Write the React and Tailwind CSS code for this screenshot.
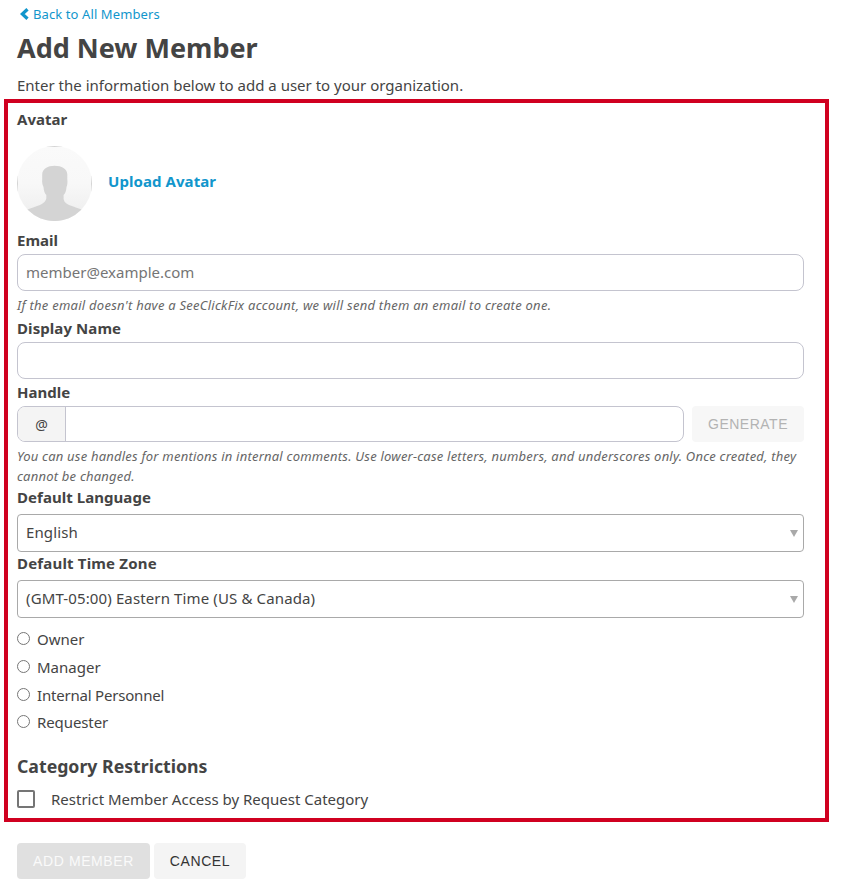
import React, { useState } from 'react';

const roles = [
  { id: 'owner', label: 'Owner', row: 'h-7' },
  { id: 'manager', label: 'Manager', row: 'h-7' },
  { id: 'internal', label: 'Internal Personnel', row: 'h-7 tracking-[-0.2px]' },
  { id: 'requester', label: 'Requester', row: 'h-[27px] tracking-[-0.1px]' },
];

const AvatarPlaceholder = () => (
  <svg width="75" height="75" viewBox="0 0 75 75" className="shrink-0">
    <defs>
      <linearGradient id="avatarBg" x1="0" y1="0" x2="0" y2="1">
        <stop offset="0" stopColor="#fafafa" />
        <stop offset="0.5" stopColor="#f8f8f8" />
        <stop offset="1" stopColor="#ececec" />
      </linearGradient>
      <clipPath id="avatarClip">
        <circle cx="37.5" cy="37.5" r="37.5" />
      </clipPath>
    </defs>
    <g clipPath="url(#avatarClip)">
      <rect width="75" height="75" fill="url(#avatarBg)" />
      <path
        d="M37.5 19.700C31 19.700 25.200 22.500 25.200 28.500V33C24.800 36.500 25.600 39.500 26.500 41C26.800 45 27.800 47.500 29.300 49V52.500C28.800 55 27 57 23 59C18 61 14 62 10.500 63.500L3 75H72L64.500 63.500C61 62 57 61 52 59C48 57 46.800 55 46.600 52.500V49C48.200 47.500 49.200 45 49.500 41C50.400 39.500 50.700 36.500 50.300 33V28.500C50.300 22.500 44.500 19.700 37.500 19.700Z"
        fill="#d4d4d4"
      />
      <rect x="0.500" y="0.500" width="74" height="74" fill="none" stroke="#d4d4d4" />
    </g>
  </svg>
);

const Select = ({ value }) => (
  <button
    type="button"
    className="flex h-[38px] w-full items-center justify-between rounded-[4px] border border-[#a9a9a9] bg-white pr-[5px] pl-2 text-[15px]"
  >
    <span className="pb-[2px] tracking-[0.13px]">{value}</span>
    <svg width="8" height="7" viewBox="0 0 8 7">
      <path d="M0 0H8L4 7Z" fill="#a9a9a9" />
    </svg>
  </button>
);

const App = () => {
  const [role, setRole] = useState(null);

  return (
    <div className="h-[885px] w-[861px] overflow-hidden bg-white font-['Noto_Sans',sans-serif] text-[15px] text-[#444444]">
      <header className="pl-[17px]">
        <a href="#" className="flex h-7 items-center gap-[4px] pl-[3px] text-[13px] tracking-[0.1px] text-[#1196cc]">
          <svg width="9" height="12" viewBox="0 0 9 12">
            <path d="M7.500 1.200L2.300 6L7.500 10.800" fill="none" stroke="#1196cc" strokeWidth="3.300" />
          </svg>
          <span className="pt-[2px]">Back to All Members</span>
        </a>
        <h1 className="h-10 text-[27px] leading-10 font-bold">Add New Member</h1>
        <p className="flex h-[31px] items-center pt-[3px]">
          Enter the information below to add a user to your organization.
        </p>
      </header>

      <main className="ml-1 w-[825px] border-4 border-[#d00020] pr-[21px] pb-[5px] pl-[9px]">
        <h2 className="h-[34px] leading-8 font-bold">Avatar</h2>
        <div className="mt-[9px] flex items-center gap-4">
          <AvatarPlaceholder />
          <a href="#" className="pb-1 font-bold tracking-[0.07px] text-[#1196cc]">Upload Avatar</a>
        </div>

        <label htmlFor="email" className="mt-[7px] flex h-[26px] items-center pb-[2px] font-bold">Email</label>
        <input
          id="email"
          type="email"
          placeholder="member@example.com"
          className="block h-[37px] w-full rounded-[8px] border border-[#c4c4cf] px-2 pb-[2px] text-[15px] placeholder:text-[#757575]"
        />
        <p className="h-7 text-[13px] leading-7 tracking-[0.255px] text-[#666666] italic">
          If the email doesn't have a SeeClickFix account, we will send them an email to create one.
        </p>

        <label htmlFor="name" className="mb-[3px] block h-5 leading-[18px] font-bold tracking-[0.08px]">Display Name</label>
        <input id="name" type="text" className="block h-[37px] w-full rounded-[8px] border border-[#c4c4cf] px-2" />

        <label htmlFor="handle" className="flex h-[27px] items-center font-bold">Handle</label>
        <div className="flex gap-2">
          <div className="flex h-9 w-[667px] overflow-hidden rounded-[8px] border border-[#c4c4cf]">
            <span className="flex w-12 shrink-0 items-center justify-center border-r border-[#c4c4cf] bg-[#f4f4f4] text-[14px]">@</span>
            <input id="handle" type="text" className="min-w-0 flex-1 px-2" />
          </div>
          <button
            type="button"
            className="h-9 w-[112px] rounded-[4px] bg-[#f7f7f7] font-['Liberation_Sans',sans-serif] text-[14px] tracking-[0.5px] text-[#b3b3b3]"
          >
            GENERATE
          </button>
        </div>
        <p className="mt-1 text-[13px] leading-5 tracking-[0.215px] text-[#666666] italic">
          <span className="block whitespace-nowrap">
            You can use handles for mentions in internal comments. Use lower-case letters, numbers, and underscores only. Once created, they
          </span>
          <span className="block">cannot be changed.</span>
        </p>

        <h2 className="mt-[2px] mb-[6px] h-5 leading-[18px] font-bold tracking-[0.05px]">Default Language</h2>
        <Select value="English" />
        <h2 className="mb-1 h-6 leading-[22px] font-bold tracking-[0.18px]">Default Time Zone</h2>
        <Select value="(GMT-05:00) Eastern Time (US & Canada)" />

        <div className="mt-[7px]">
          {roles.map((item) => (
            <label key={item.id} className={`flex items-center gap-[7px] ${item.row}`}>
              <input
                type="radio"
                name="role"
                checked={role === item.id}
                onChange={() => setRole(item.id)}
                className="mb-[2px] h-[13px] w-[13px]"
              />
              {item.label}
            </label>
          ))}
        </div>

        <h2 className="mt-[17px] h-7 text-[17.7px] leading-[26px] font-bold">Category Restrictions</h2>
        <label className="mt-1 flex h-7 items-center gap-4">
          <input type="checkbox" className="h-[18px] w-[18px] appearance-none rounded-[2px] border-2 border-[#757575]" />
          Restrict Member Access by Request Category
        </label>
      </main>

      <footer className="mt-[21px] flex gap-1 pl-[17px] font-['Liberation_Sans',sans-serif] text-[14px] tracking-[0.6px]">
        <button type="button" className="h-9 w-[133px] rounded-[4px] bg-[#e0e0e0] text-[#fafafa]">ADD MEMBER</button>
        <button type="button" className="h-9 w-[92px] rounded-[4px] bg-[#f4f4f4] text-[#333333]">CANCEL</button>
      </footer>
    </div>
  );
};

export default App;
